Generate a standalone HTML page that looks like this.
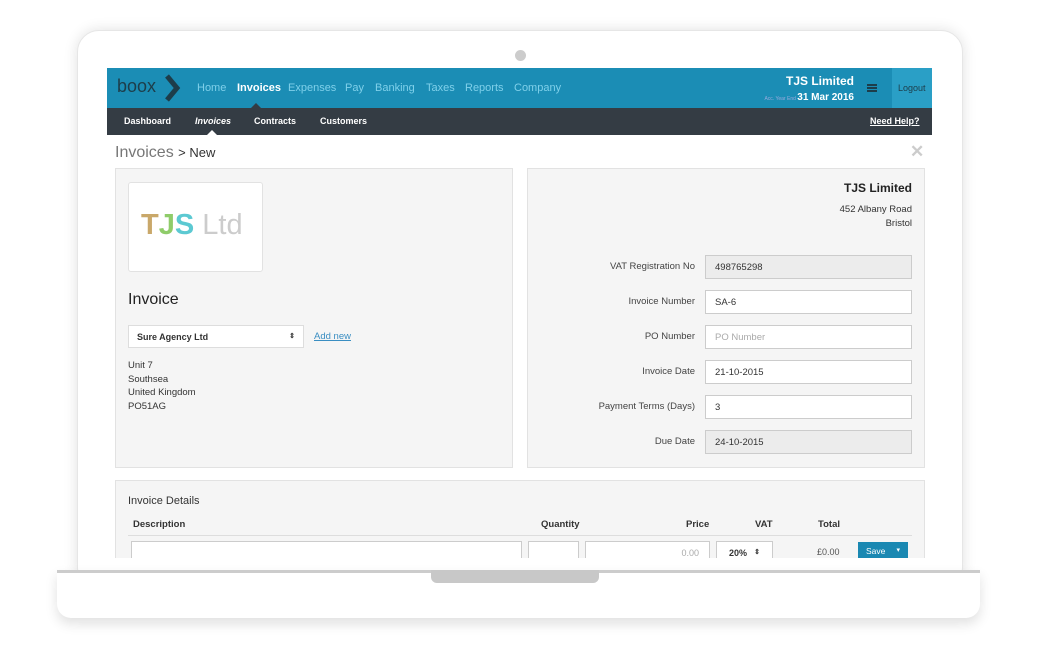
<!DOCTYPE html>
<html><head><style>
*{margin:0;padding:0;box-sizing:border-box}
body{width:1050px;height:652px;background:#fff;position:relative;overflow:hidden;font-family:"Liberation Sans",sans-serif;color:#333}
.a{position:absolute}
.lap{left:77px;top:30px;width:886px;height:560px;background:#fff;border-radius:22px;box-shadow:0 0 14px rgba(0,0,0,.12);border:1px solid #e6e6e6}
.base{left:57px;top:570px;width:923px;height:48px;background:#fff;border-radius:0 0 14px 14px;box-shadow:0 6px 12px rgba(0,0,0,.12);border-top:3px solid #ccc}
.notch{left:431px;top:570px;width:168px;height:13px;background:#c8c8c8;border-radius:0 0 6px 6px}
.scr{left:107px;top:68px;width:825px;height:490px;background:#fff;overflow:hidden}
.top{left:0;top:0;width:825px;height:40px;background:#1b8db5}
.nav{top:14px;font-size:11px;color:#7fd0ea}
.sub{left:0;top:40px;width:825px;height:27px;background:#343c44}
.sn{top:48px;font-size:9px;color:#fff;font-weight:bold}
.panel{background:#f5f5f5;border:1px solid #e2e2e2}
.lbl{font-size:9.5px;color:#444;text-align:right;width:160px}
.inp{width:207px;height:24px;border:1px solid #ccc;background:#fff;font-size:9.5px;padding:6px 9px;color:#333}
.g{background:#ececec}
</style></head><body>
<div class="a lap"></div>
<div class="a" style="left:515px;top:50px;width:11px;height:11px;border-radius:50%;background:#ccc"></div>
<div class="a base"></div>
<div class="a notch"></div>
<div class="a scr">
 <div class="a top"></div>
 <div class="a" style="left:785px;top:0;width:40px;height:40px;background:#2a9fc6"></div>
 <div class="a" style="left:10px;top:8px;font-size:18px;color:#1d3d4a">boox</div>
 <svg class="a" style="left:56px;top:5px" width="18" height="30"><path d="M4 3 L14 15 L4 27" stroke="#1d3d4a" stroke-width="5" fill="none"/></svg>
 <div class="a nav" style="left:90px">Home</div>
 <div class="a nav" style="left:130px;color:#fff;font-weight:bold">Invoices</div>
 <div class="a nav" style="left:181px">Expenses</div>
 <div class="a nav" style="left:238px">Pay</div>
 <div class="a nav" style="left:268px">Banking</div>
 <div class="a nav" style="left:319px">Taxes</div>
 <div class="a nav" style="left:358px">Reports</div>
 <div class="a nav" style="left:407px">Company</div>
 <div class="a" style="left:144px;top:35px;border:5px solid transparent;border-bottom-color:#343c44;border-top:0"></div>
 <div class="a" style="left:600px;top:6px;width:147px;text-align:right;font-size:12px;font-weight:bold;color:#fff">TJS Limited</div>
 <div class="a" style="left:600px;top:24px;width:147px;text-align:right;font-size:10px;font-weight:bold;color:#fff"><span style="font-size:5px;font-weight:normal;color:#9ad">Acc. Year End </span>31 Mar 2016</div>
 <div class="a" style="left:760px;top:16px;width:10px;height:8px;border-top:2px solid #1d3d4a;border-bottom:2px solid #1d3d4a"></div>
 <div class="a" style="left:760px;top:19px;width:10px;height:2px;background:#1d3d4a"></div>
 <div class="a" style="left:791px;top:15px;font-size:9px;color:#1d3d4a">Logout</div>
 <div class="a sub"></div>
 <div class="a sn" style="left:17px">Dashboard</div>
 <div class="a sn" style="left:88px;font-style:italic">Invoices</div>
 <div class="a sn" style="left:147px">Contracts</div>
 <div class="a sn" style="left:213px">Customers</div>
 <div class="a" style="left:100px;top:62px;border:5px solid transparent;border-bottom-color:#fff;border-top:0"></div>
 <div class="a sn" style="left:763px;text-decoration:underline">Need Help?</div>
 <div class="a" style="left:8px;top:76px;font-size:16px;color:#777">Invoices <span style="font-size:13px;color:#333">&gt; New</span></div>
 <div class="a" style="left:803px;top:74px;font-size:17px;color:#ccc;font-weight:bold">✕</div>
 <div class="a panel" style="left:8px;top:100px;width:398px;height:300px"></div>
 <div class="a" style="left:21px;top:114px;width:135px;height:90px;background:#fff;border:1px solid #e2e2e2;border-radius:3px"></div>
 <div class="a" style="left:34px;top:141px;font-size:29px;font-weight:bold"><span style="color:#c9a86a">T</span><span style="color:#8fcc6a">J</span><span style="color:#5cc9d2">S</span> <span style="font-weight:normal;color:#ccc">Ltd</span></div>
 <div class="a" style="left:21px;top:223px;font-size:16px;color:#222">Invoice</div>
 <div class="a" style="left:21px;top:257px;width:176px;height:23px;background:#fff;border:1px solid #ddd;font-size:9px;font-weight:bold;padding:6px 8px">Sure Agency Ltd<span style="float:right;font-size:7px">⇕</span></div>
 <div class="a" style="left:207px;top:263px;font-size:9.5px;color:#3a8ec2;text-decoration:underline">Add new</div>
 <div class="a" style="left:21px;top:291px;font-size:9.5px;line-height:13.5px;color:#333">Unit 7<br>Southsea<br>United Kingdom<br>PO51AG</div>
 <div class="a panel" style="left:420px;top:100px;width:398px;height:300px"></div>
 <div class="a" style="left:600px;top:113px;width:205px;text-align:right;font-size:12px;font-weight:bold;color:#222">TJS Limited</div>
 <div class="a" style="left:600px;top:135px;width:205px;text-align:right;font-size:9.5px;line-height:14px">452 Albany Road<br>Bristol</div>
 <div class="a lbl" style="left:428px;top:193px">VAT Registration No</div>
 <div class="a inp g" style="left:598px;top:187px">498765298</div>
 <div class="a lbl" style="left:428px;top:228px">Invoice Number</div>
 <div class="a inp" style="left:598px;top:222px">SA-6</div>
 <div class="a lbl" style="left:428px;top:263px">PO Number</div>
 <div class="a inp" style="left:598px;top:257px;color:#aaa">PO Number</div>
 <div class="a lbl" style="left:428px;top:298px">Invoice Date</div>
 <div class="a inp" style="left:598px;top:292px">21-10-2015</div>
 <div class="a lbl" style="left:428px;top:333px">Payment Terms (Days)</div>
 <div class="a inp" style="left:598px;top:327px">3</div>
 <div class="a lbl" style="left:428px;top:368px">Due Date</div>
 <div class="a inp g" style="left:598px;top:362px">24-10-2015</div>
 <div class="a panel" style="left:8px;top:412px;width:810px;height:100px"></div>
 <div class="a" style="left:21px;top:427px;font-size:11px;color:#333">Invoice Details</div>
 <div class="a" style="left:26px;top:451px;font-size:9.5px;font-weight:bold">Description</div>
 <div class="a" style="left:434px;top:451px;font-size:9.5px;font-weight:bold">Quantity</div>
 <div class="a" style="left:579px;top:451px;font-size:9.5px;font-weight:bold">Price</div>
 <div class="a" style="left:648px;top:451px;font-size:9.5px;font-weight:bold">VAT</div>
 <div class="a" style="left:711px;top:451px;font-size:9.5px;font-weight:bold">Total</div>
 <div class="a" style="left:21px;top:467px;width:784px;height:1px;background:#ddd"></div>
 <div class="a" style="left:24px;top:473px;width:391px;height:24px;background:#fff;border:1px solid #ccc"></div>
 <div class="a" style="left:421px;top:473px;width:51px;height:24px;background:#fff;border:1px solid #ccc"></div>
 <div class="a" style="left:478px;top:473px;width:125px;height:24px;background:#fff;border:1px solid #ccc;font-size:9px;color:#aaa;text-align:right;padding:6px 10px">0.00</div>
 <div class="a" style="left:609px;top:473px;width:57px;height:24px;background:#fff;border:1px solid #ccc;font-size:9px;font-weight:bold;padding:6px 12px">20%<span style="float:right;font-size:7px">⇕</span></div>
 <div class="a" style="left:710px;top:479px;font-size:9px;color:#555">£0.00</div>
 <div class="a" style="left:751px;top:474px;width:50px;height:18px;background:#1a88b2;color:#fff;font-size:8.5px;padding:4px 8px">Save<span style="float:right;font-size:7px">▾</span></div>
</div>
</body></html>
